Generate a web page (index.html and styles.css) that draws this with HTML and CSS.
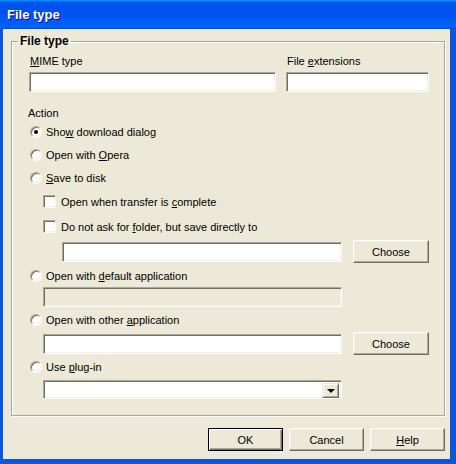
FILE: index.html
```html
<!DOCTYPE html>
<html lang="en">
<head>
    <meta charset="UTF-8">
    <title>File type</title>
    <link rel="stylesheet" href="styles.css">
</head>
<body>
    <div class="window">
        <div class="titlebar">File type</div>
        <div class="client">
            <fieldset class="group">
                <legend>File type</legend>

                <!-- MIME / extensions -->
                <div class="field-row">
                    <label class="field field-mime">
                        <span class="caption"><u>M</u>IME type</span>
                        <span class="edit"></span>
                    </label>
                    <label class="field field-ext">
                        <span class="caption">File <u>e</u>xtensions</span>
                        <span class="edit"></span>
                    </label>
                </div>

                <!-- Action choices -->
                <div class="section-label">Action</div>
                <div class="opt"><span class="radio checked"></span><span>Sho<u>w</u> download dialog</span></div>
                <div class="opt"><span class="radio"></span><span>Open with <u>O</u>pera</span></div>
                <div class="opt"><span class="radio"></span><span><u>S</u>ave to disk</span></div>
                <div class="opt sub"><span class="check"></span><span>Open when transfer is <u>c</u>omplete</span></div>
                <div class="opt sub"><span class="check"></span><span>Do not ask for <u>f</u>older, but save directly to</span></div>
                <div class="path-row deep">
                    <span class="edit path"></span>
                    <button class="btn choose">Choose</button>
                </div>
                <div class="opt gap"><span class="radio"></span><span>Open with <u>d</u>efault application</span></div>
                <div class="indent"><span class="edit wide disabled"></span></div>
                <div class="opt gap"><span class="radio"></span><span>Open with other <u>a</u>pplication</span></div>
                <div class="path-row">
                    <span class="edit wide"></span>
                    <button class="btn choose">Choose</button>
                </div>
                <div class="opt"><span class="radio"></span><span>Use <u>p</u>lug-in</span></div>
                <div class="indent">
                    <div class="combo">
                        <span class="combo-btn"><span class="arrow"></span></span>
                    </div>
                </div>
            </fieldset>

            <div class="buttons">
                <button class="btn default">OK</button>
                <button class="btn">Cancel</button>
                <button class="btn"><u>H</u>elp</button>
            </div>
        </div>
    </div>
</body>
</html>
```

FILE: styles.css
```css
:root {
    --face: #ece9d8;
    --shadow: #aca899;
    --dark: #716f64;
    --light: #f1efe2;
    --frame: #0b55e0;
}
body {
    margin: 0;
    background: #fff;
    font-family: 'Liberation Sans', Arial, sans-serif;
    font-size: 11px;
    color: #000;
}
u { text-underline-offset: 1px; }

/* --- Window frame --- */
.window {
    width: 456px;
    height: 464px;
    display: flex;
    flex-direction: column;
    background: var(--frame);
}
.titlebar {
    flex: none;
    height: 29px;
    padding-left: 7px;
    font: bold 13px/30px 'Liberation Sans', Arial, sans-serif;
    color: #fff;
    text-shadow: 1px 1px #0f1089;
    background: linear-gradient(#0997ff 0, #0053ee 9%, #0050ee 40%, #0060fb 85%, #0066ff 92%, #005bff 95%, #0045da 100%);
}
.client {
    flex: 1;
    margin: 0 6px 5px 3px;
    background: var(--face);
    display: flex;
    flex-direction: column;
}

/* --- Group box --- */
.group {
    margin: 6px 5px 0 8px;
    padding: 7px 0 16px 0;
    border: 1px solid var(--shadow);
    box-shadow: inset 1px 1px #fff, 1px 1px #fff;
    min-width: 0;
}
.group legend {
    margin-left: 6px;
    padding: 0 2px;
    font-weight: bold;
    font-size: 12px;
    line-height: 13px;
}

/* --- Fields --- */
.field-row {
    display: flex;
    gap: 10px;
    margin-left: 17px;
}
.field { display: flex; flex-direction: column; }
.field-mime { width: 247px; }
.field-ext { width: 143px; }
.caption {
    line-height: 13px;
    margin-bottom: 4px;
    padding-left: 1px;
}
.edit {
    display: block;
    height: 20px;
    box-sizing: border-box;
    background: #fff;
    border: 1px solid;
    border-color: var(--shadow) #fff #fff var(--shadow);
    box-shadow: inset 1px 1px var(--dark), inset -1px -1px var(--light);
}
.edit.disabled { background: var(--face); }
.edit.path { width: 280px; }
.edit.wide { width: 299px; }

.section-label {
    margin: 15px 0 0 16px;
    line-height: 13px;
}

/* --- Radio / check rows --- */
.opt {
    display: flex;
    align-items: center;
    height: 23px;
    padding-left: 18px;
    white-space: pre;
}
.opt.sub { height: 25px; padding-left: 31px; }
.opt.gap { margin-top: 1px; }
.radio {
    width: 12px;
    height: 12px;
    box-sizing: border-box;
    border-radius: 50%;
    border: 1px solid;
    border-color: var(--shadow) #fff #fff var(--shadow);
    box-shadow: inset 1px 1px var(--dark), inset -1px -1px var(--light);
    background: #fff;
    margin-right: 4px;
    display: flex;
    align-items: center;
    justify-content: center;
}
.radio.checked::after {
    content: '';
    width: 4px;
    height: 4px;
    border-radius: 50%;
    background: #000;
}
.check {
    width: 13px;
    height: 13px;
    box-sizing: border-box;
    background: #fff;
    border: 1px solid;
    border-color: var(--shadow) #fff #fff var(--shadow);
    box-shadow: inset 1px 1px var(--dark), inset -1px -1px var(--light);
    margin-right: 5px;
}

.path-row {
    display: flex;
    align-items: center;
    gap: 11px;
    height: 23px;
    margin-top: 1px;
    padding-left: 31px;
}
.path-row.deep { padding-left: 50px; }
.indent { padding-left: 31px; }

/* --- Combo --- */
.combo {
    width: 299px;
    height: 19px;
    margin-top: 2px;
    box-sizing: border-box;
    background: #fff;
    border: 1px solid;
    border-color: var(--shadow) #fff #fff var(--shadow);
    box-shadow: inset 1px 1px var(--dark), inset -1px -1px var(--light);
    display: flex;
    justify-content: flex-end;
    padding: 2px 2px 2px 0;
}
.combo-btn {
    width: 17px;
    height: 15px;
    box-sizing: border-box;
    background: var(--face);
    border: 1px solid;
    border-color: var(--face) var(--dark) var(--dark) var(--face);
    box-shadow: inset 1px 1px #fff, inset -1px -1px var(--shadow);
    display: flex;
    align-items: center;
    justify-content: center;
}
.arrow {
    width: 0;
    height: 0;
    border-left: 4px solid transparent;
    border-right: 4px solid transparent;
    border-top: 4px solid #000;
    margin-top: 1px;
}

/* --- Buttons --- */
.btn {
    height: 23px;
    width: 75px;
    padding: 0;
    font: 11px 'Liberation Sans', Arial, sans-serif;
    color: #000;
    background: var(--face);
    border: 1px solid;
    border-color: #fff var(--dark) var(--dark) #fff;
    box-shadow: inset -1px -1px var(--shadow), inset 1px 1px var(--light);
}
.btn.choose { width: 76px; }
.btn.default {
    border-color: #000;
    box-shadow: inset 1px 1px #fff, inset -1px -1px var(--dark), inset -2px -2px var(--shadow);
}
.buttons {
    display: flex;
    justify-content: flex-end;
    gap: 6px;
    margin: 12px 5px 0 0;
}
```
